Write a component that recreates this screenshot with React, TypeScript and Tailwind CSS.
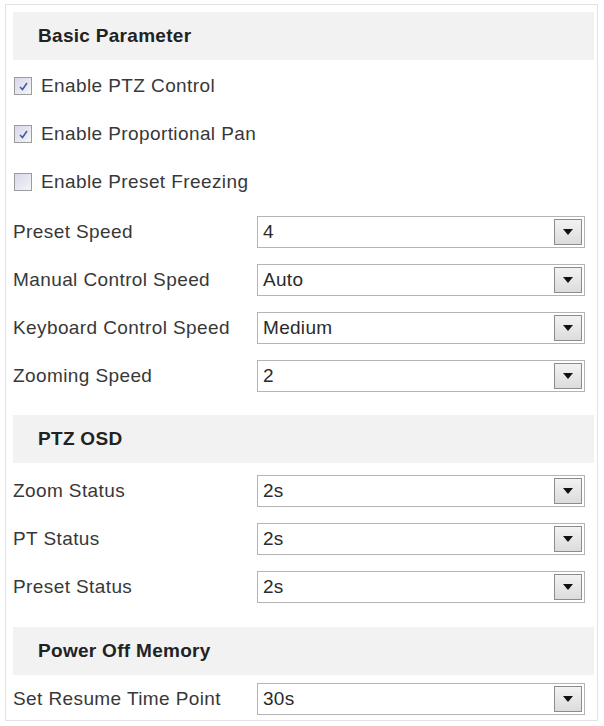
import React from 'react';

const font = { fontFamily: '"Liberation Sans", Arial, sans-serif' };

function Header({ title }: { title: string }) {
  return (
    <div className="h-[48px] flex items-center bg-[#f2f2f2] pl-[25px] text-[19px] tracking-[0.3px] font-bold text-[#222]">
      {title}
    </div>
  );
}

function CheckRow({ label, checked }: { label: string; checked: boolean }) {
  return (
    <div className="h-[48px] flex items-center gap-[9px] pl-px">
      <span className="w-[18px] h-[18px] border border-[#9c9c9c] bg-gradient-to-br from-[#d8d8ea] to-[#f4f4f8] flex items-center justify-center">
        {checked && (
          <svg width="11" height="11" viewBox="0 0 11 11">
            <path d="M2 6 L4.5 8.5 L9 2" stroke="#4a58a0" strokeWidth="1.6" fill="none" />
          </svg>
        )}
      </span>
      <span className="text-[19px] tracking-[0.4px] text-[#383838]">{label}</span>
    </div>
  );
}

function SelectRow({ label, value }: { label: string; value: string }) {
  return (
    <div className="h-[48px] flex items-center">
      <span className="w-[244px] text-[19px] tracking-[0.4px] text-[#383838]">{label}</span>
      <div className="w-[328px] h-[32px] border border-[#b4b4b4] bg-white flex items-center justify-between pl-[5px] pr-[2px]">
        <span className="text-[19px] tracking-[0.3px] text-[#2a2a2a]">{value}</span>
        <span className="w-[28px] h-[26px] border border-[#8c8c8c] bg-gradient-to-b from-[#f2f2f2] to-[#dcdcdc] flex items-center justify-center">
          <svg width="10" height="6" viewBox="0 0 10 6">
            <path d="M0 0 H10 L5 6 Z" fill="#111" />
          </svg>
        </span>
      </div>
    </div>
  );
}

export default function App() {
  return (
    <div className="w-[604px] h-[726px] bg-white pt-[4px] pl-[5px]" style={font}>
      <div className="w-[593px] h-[717px] border border-[#e2e2e2] pt-[7px] pl-[7px] pr-[3px]">
        <Header title="Basic Parameter" />
        <div className="pt-[2px]">
          <CheckRow label="Enable PTZ Control" checked />
          <CheckRow label="Enable Proportional Pan" checked />
          <CheckRow label="Enable Preset Freezing" checked={false} />
          <div className="pt-[2px]">
            <SelectRow label="Preset Speed" value="4" />
            <SelectRow label="Manual Control Speed" value="Auto" />
            <SelectRow label="Keyboard Control Speed" value="Medium" />
            <SelectRow label="Zooming Speed" value="2" />
          </div>
        </div>
        <div className="mt-[15px]">
          <Header title="PTZ OSD" />
        </div>
        <div className="pt-[4px]">
          <SelectRow label="Zoom Status" value="2s" />
          <SelectRow label="PT Status" value="2s" />
          <SelectRow label="Preset Status" value="2s" />
        </div>
        <div className="mt-[16px]">
          <Header title="Power Off Memory" />
        </div>
        <SelectRow label="Set Resume Time Point" value="30s" />
      </div>
    </div>
  );
}
